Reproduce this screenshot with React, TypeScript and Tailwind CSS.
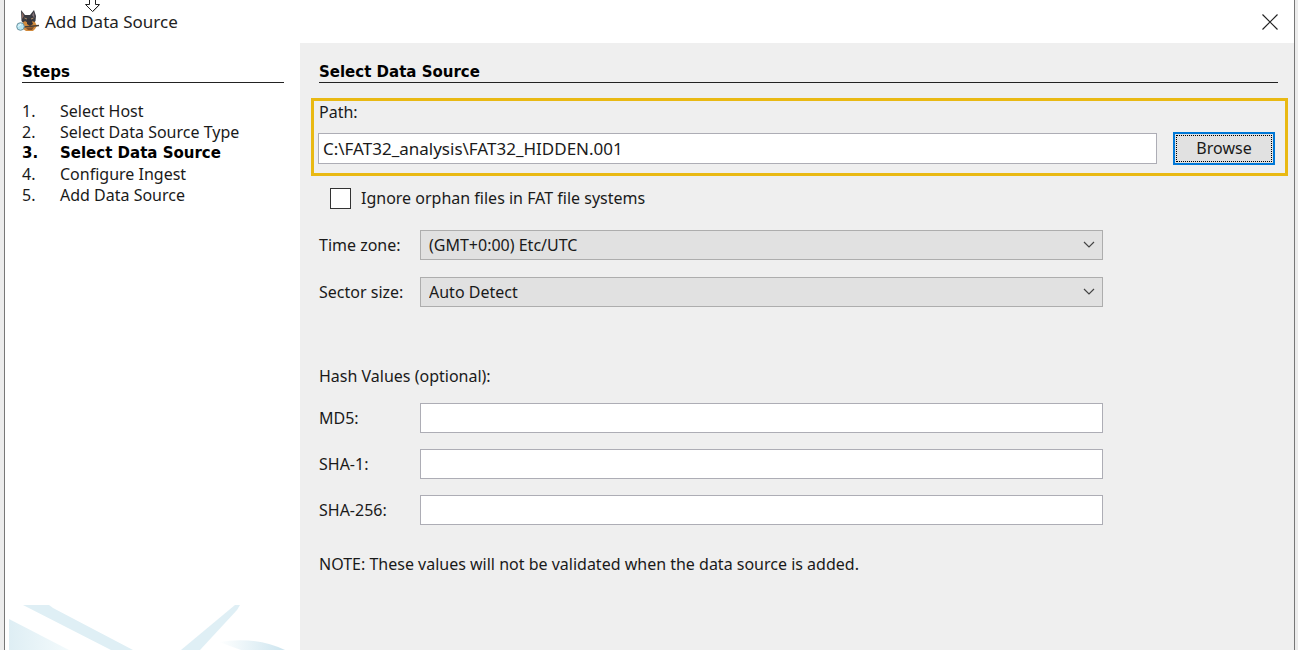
import { useState } from "react";

type HashField = {
  id: string;
  label: string;
};

const steps = [
  "Select Host",
  "Select Data Source Type",
  "Select Data Source",
  "Configure Ingest",
  "Add Data Source",
];

const hashFields: HashField[] = [
  { id: "md5", label: "MD5:" },
  { id: "sha1", label: "SHA-1:" },
  { id: "sha256", label: "SHA-256:" },
];

const timeZones = ["(GMT+0:00) Etc/UTC", "(GMT+1:00) Europe/Paris", "(GMT-5:00) America/New_York"];
const sectorSizes = ["Auto Detect", "512", "1024", "2048", "4096"];

function DogIcon() {
  return (
    <svg width="24" height="24" viewBox="0 0 24 24" aria-hidden="true">
      <path d="M5 0 L9 5 L14 5 L18 0 L20 6 L19.5 11 L17 14 L8 14 L5.5 11 Z" fill="#3a3b41" />
      <path d="M6 2 L8 6 L6 9 Z" fill="#8b6a62" />
      <path d="M18 2 L18.500 8 L16 5 Z" fill="#85747a" />
      <path d="M5 14 L9 11 L12 13 L15 11 L19 12 L21 16 L19 19 L17 21 L10 21 L7 19 Z" fill="#d18a3c" />
      <path d="M11 9 L15 9 L17 14 L14 16 L11 14 Z" fill="#35343a" />
      <path d="M10 18 L18 17 L16 20 L12 20 Z" fill="#80502a" />
      <path d="M8.5 8 L11 9 M15 9 L17.5 8" stroke="#b08c66" />
      <path d="M8 17 L23 15.500" stroke="#4a4038" strokeWidth="1.500" />
      <circle cx="4.5" cy="16.5" r="3.8" fill="#b9e6f2" stroke="#6b929f" />
      <path d="M2.500 16.500 Q3 14.500 5 14.500" stroke="#f3fdff" fill="none" />
    </svg>
  );
}

function Chevron() {
  return (
    <svg
      className="pointer-events-none absolute right-2 top-2 h-3 w-3"
      viewBox="0 0 12 12"
      fill="none"
      stroke="#444"
      strokeWidth="1.2"
      aria-hidden="true"
    >
      <path d="M1 4 L6 9 L11 4" />
    </svg>
  );
}

function SelectRow({ id, label, options }: { id: string; label: string; options: string[] }) {
  return (
    <div className="flex items-center">
      <label htmlFor={id} className="w-[101px] shrink-0">
        {label}
      </label>
      <div className="relative flex-1">
        <select
          id={id}
          className="block h-[30px] w-full appearance-none rounded-none border border-[#adadad] bg-[#e1e1e1] px-2 outline-none"
        >
          {options.map((option) => (
            <option key={option}>{option}</option>
          ))}
        </select>
        <Chevron />
      </div>
    </div>
  );
}

export default function App() {
  const [path, setPath] = useState("C:\\FAT32_analysis\\FAT32_HIDDEN.001");
  const [ignoreOrphans, setIgnoreOrphans] = useState(false);
  const currentStep = 2;

  return (
    <div className="min-h-screen bg-[#ececec] pl-1 pr-[3px] font-['Noto_Sans',sans-serif] text-[16px] leading-[21px] text-[#1a1a1a]">
      <div className="relative flex min-h-screen flex-col border-x border-[#777] bg-white">
        {/* Title bar */}
        <header className="flex h-[43px] items-center justify-between pl-[11px] pr-4">
          <div className="flex items-center gap-[5px]">
            <DogIcon />
            <h1 className="text-[17px] text-[#222]">Add Data Source</h1>
          </div>
          <button type="button" aria-label="Close">
            <svg width="16" height="16" viewBox="0 0 16 16" stroke="#222" strokeWidth="1.2">
              <path d="M0.5 0.5 L15.5 15.5 M15.5 0.5 L0.5 15.5" />
            </svg>
          </button>
        </header>

        {/* Mouse pointer */}
        <svg className="absolute left-[79px] top-0" width="18" height="14" viewBox="0 0 18 14" aria-hidden="true">
          <path d="M7 0 V5 H3 L9.5 12 L16 5 H12 V0" fill="#bbb" />
          <path d="M5.5 -1 V4.5 H1.5 L8.5 11.5 L15.5 4.5 H11.5 V-1" fill="#fff" stroke="#222" />
        </svg>

        <div className="flex flex-1">
          <aside className="flex w-[295px] shrink-0 flex-col">
            <div className="pl-[17px] pr-4 pt-5">
              <h2 className="border-b border-[#222] font-['DejaVu_Sans',sans-serif] text-[15px] font-bold leading-[19px] text-black">
                Steps
              </h2>
              <ol className="mt-[18px]">
                {steps.map((step, index) => (
                  <li
                    key={step}
                    className={
                      index === currentStep
                        ? "flex font-['DejaVu_Sans',sans-serif] text-[15px] font-bold text-black"
                        : "flex"
                    }
                  >
                    <span className="w-[38px]">{index + 1}.</span>
                    {step}
                  </li>
                ))}
              </ol>
            </div>
            <svg className="ml-1 mt-auto block" width="288" height="46" viewBox="0 0 288 46" aria-hidden="true">
              <defs>
                <linearGradient id="fadeLeft" x1="0" x2="1" y1="0" y2="0">
                  <stop offset="0" stopColor="#deeef4" />
                  <stop offset="1" stopColor="#f3fafc" />
                </linearGradient>
                <linearGradient id="fadeRight" x1="0" x2="1" y1="0" y2="0">
                  <stop offset="0" stopColor="#fff" />
                  <stop offset="1" stopColor="#cde5ef" />
                </linearGradient>
              </defs>
              <path d="M0 15 L60 46 H0 Z" fill="url(#fadeLeft)" />
              <path d="M14 1 H40 L44 4 L124 46 H102 Z" fill="#dfeff5" />
              <path d="M226 1 H231 L228 6 L191 46 H172 Z" fill="#dfeff5" />
              <path d="M210 38 Q246 32 276 46 H232 Z" fill="url(#fadeRight)" />
            </svg>
          </aside>

          <main className="flex-1 bg-[#efefef] pb-6 pl-[11px] pr-[6px] pt-5">
            <h2 className="ml-2 mr-[10px] border-b border-[#222] font-['DejaVu_Sans',sans-serif] text-[15px] font-bold leading-[19px] text-black">
              Select Data Source
            </h2>

            <section className="mt-[15px] border-3 border-[#e9b913] pb-2 pl-1 pr-[10px] pt-px">
              <label htmlFor="path" className="mb-[9px] block pl-px">
                Path:
              </label>
              <div className="flex items-center gap-4">
                <input
                  id="path"
                  type="text"
                  value={path}
                  onChange={(e) => setPath(e.target.value)}
                  className="h-[31px] flex-1 border border-[#adadb5] bg-white px-1 text-[17px] outline-none"
                />
                <button type="button" className="h-[33px] w-[102px] border-2 border-[#0078d7] bg-[#e1e1e1] p-px">
                  <span className="flex h-full items-center justify-center border border-dotted border-black">
                    Browse
                  </span>
                </button>
              </div>
            </section>

            <div className="ml-2 mr-[185px]">
              <label className="ml-[11px] mt-3 flex items-center gap-[10px]">
                <input
                  type="checkbox"
                  checked={ignoreOrphans}
                  onChange={(e) => setIgnoreOrphans(e.target.checked)}
                  className="h-[21px] w-[21px] appearance-none border border-[#333] bg-white checked:bg-[#0078d7]"
                />
                Ignore orphan files in FAT file systems
              </label>

              <div className="mt-[21px] flex flex-col gap-[17px]">
                <SelectRow id="timezone" label="Time zone:" options={timeZones} />
                <SelectRow id="sector" label="Sector size:" options={sectorSizes} />
              </div>

              <p className="mt-[59px]">Hash Values (optional):</p>
              <div className="mt-4 flex flex-col gap-4">
                {hashFields.map((field) => (
                  <div key={field.id} className="flex items-center">
                    <label htmlFor={field.id} className="w-[101px] shrink-0">
                      {field.label}
                    </label>
                    <input
                      id={field.id}
                      type="text"
                      className="h-[30px] flex-1 border border-[#adadb5] bg-white px-1 outline-none"
                    />
                  </div>
                ))}
              </div>
              <p className="mt-[29px]">NOTE: These values will not be validated when the data source is added.</p>
            </div>
          </main>
        </div>
      </div>
    </div>
  );
}
